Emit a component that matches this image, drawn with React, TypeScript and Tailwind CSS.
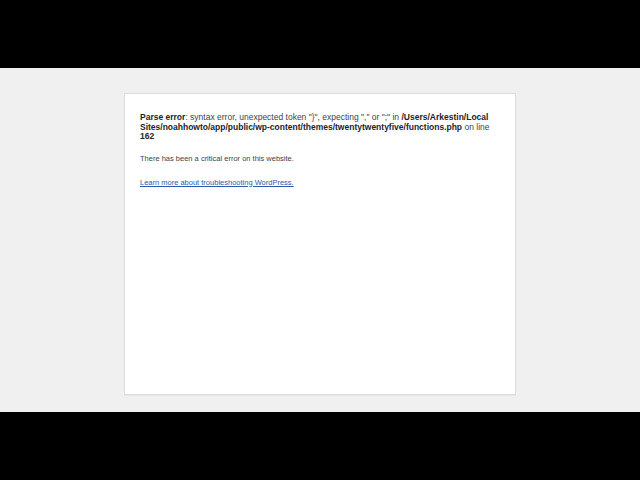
export default function App() {
  return (
    <div className="flex h-[480px] w-[640px] flex-col bg-black font-['Liberation_Sans',Arial,sans-serif]">
      <div className="h-[68px]" />
      <div className="h-[344px] bg-[#f0f0f0] pt-[25px]">
        <div className="mx-auto h-[302px] w-[392px] border border-[#dcdcde] bg-white px-[15px] pt-[19px] shadow-[0_1px_1px_rgba(0,0,0,0.04)]">
          <p className="text-[8.5px] leading-[9.5px] text-[#3c434a]">
            <b className="text-[#1d2327]">Parse error</b>: syntax error, unexpected token "{"}"}", expecting "," or ";" in{" "}
            <b className="text-[#1d2327]">/Users/Arkestin/Local Sites/noahhowto/app/public/wp-content/themes/twentytwentyfive/functions.php</b>{" "}
            on line <b className="text-[#1d2327]">162</b>
          </p>
          <p className="mt-[11px] text-[7.5px] leading-[11px] text-[#3c434a]">
            There has been a critical error on this website.
          </p>
          <p className="mt-[13px] text-[7.5px] leading-[11px]">
            <a href="#" className="text-[#2a59b0] underline">
              Learn more about troubleshooting WordPress.
            </a>
          </p>
        </div>
      </div>
      <div className="flex-1" />
    </div>
  );
}
